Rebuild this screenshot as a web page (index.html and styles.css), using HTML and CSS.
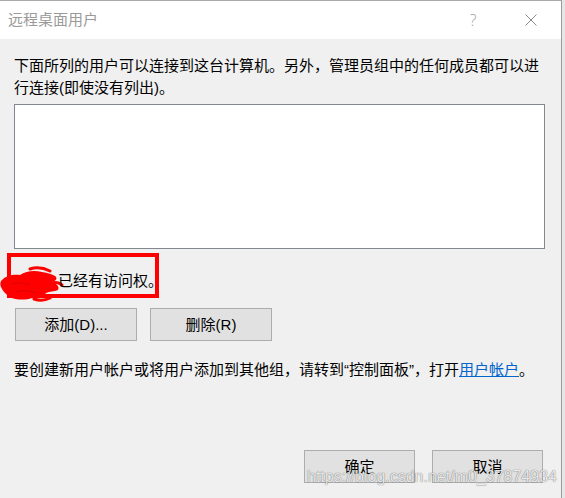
FILE: index.html
```html
<!DOCTYPE html>
<html lang="zh-CN">
<head>
<meta charset="utf-8">
<title>远程桌面用户</title>
<link rel="stylesheet" href="styles.css">
</head>
<body>
<div class="window">
  <div class="titlebar">
    <span class="title">远程桌面用户</span>
    <span class="help">?</span>
    <span class="close"><svg width="12" height="12" viewBox="0 0 12 12"><path d="M0.5 0.5 L11.5 11.5 M11.5 0.5 L0.5 11.5" stroke="#8a8a8a" stroke-width="1" fill="none"/></svg></span>
  </div>
  <div class="body">
    <p class="desc">下面所列的用户可以连接到这台计算机。另外，管理员组中的任何成员都可以进行连接(即使没有列出)。</p>
    <div class="listbox"></div>
    <div class="access">
      <svg class="scribble" width="64" height="38" viewBox="0 0 64 38">
        <path d="M1 16 C6 10 14 9 20 10 C26 6 34 5 42 7 C48 8 52 9 55 11 C58 13 56 16 52 17 C56 19 60 21 58 25 C54 27 50 26 46 28 C44 32 38 34 32 33 C26 35 18 35 12 33 C8 31 4 28 2 24 C0 21 0 18 1 16 Z" fill="#ff0000"/>
        <path d="M30 4 C36 2 44 3 50 6" stroke="#ff0000" stroke-width="3" fill="none" stroke-linecap="round"/>
        <path d="M34 34 C40 36 46 35 50 33" stroke="#ff0000" stroke-width="3" fill="none" stroke-linecap="round"/>
        <path d="M50 18 C55 17 60 18 62 20" stroke="#ff0000" stroke-width="3" fill="none" stroke-linecap="round"/>
        <path d="M12 19 C18 17 24 18 30 20" stroke="#e80000" stroke-width="1.5" fill="none"/>
        <path d="M16 27 C22 25 30 26 36 28" stroke="#e80000" stroke-width="1.5" fill="none"/>
      </svg>
      <span class="access-text">已经有访问权。</span>
    </div>
    <div class="actions">
      <button class="btn">添加(D)...</button>
      <button class="btn">删除(R)</button>
    </div>
    <p class="info">要创建新用户帐户或将用户添加到其他组，请转到“控制面板”，打开<a class="link" href="#">用户帐户</a>。</p>
    <div class="footer">
      <button class="btn btn-footer">确定</button>
      <button class="btn btn-footer">取消</button>
    </div>
  </div>
  <div class="watermark">https://blog.csdn.net/m0_37874934</div>
</div>
</body>
</html>
```
FILE: styles.css
```css
* { box-sizing: border-box; }
html, body { margin: 0; padding: 0; }
body {
  background: #e6e6e6;
  font-family: "Liberation Sans", "Noto Sans CJK SC", sans-serif;
  font-size: 15px;
  color: #000;
  width: 565px;
  height: 498px;
  overflow: hidden;
}
.window {
  position: relative;
  width: 562px;
  height: 498px;
  border-top: 1px solid #a9a9a9;
  border-right: 1px solid #9c9c9c;
  background: #f0f0f0;
  display: flex;
  flex-direction: column;
}
.titlebar {
  height: 38px;
  flex: 0 0 38px;
  background: #fff;
  display: flex;
  align-items: center;
  padding-left: 8px;
  color: #9a9a9a;
}
.title { flex: 1; font-size: 15px; line-height: 20px; }
.help {
  width: 20px;
  text-align: center;
  margin-right: 32px;
  font-size: 16px;
  color: #a0a0a0;
  font-family: "Open Sans", "Liberation Sans", sans-serif;
  font-weight: 300;
}
.close {
  width: 32px;
  margin-right: 14px;
  display: flex;
  justify-content: center;
  align-items: center;
}
.body {
  flex: 1;
  display: flex;
  flex-direction: column;
  padding: 16px 17px 15px 14px;
}
.desc {
  margin: 0;
  line-height: 22px;
}
.listbox {
  margin-top: 5px;
  width: 531px;
  height: 145px;
  border: 1px solid #828790;
  background: #fff;
}
.access {
  position: relative;
  margin-top: 4px;
  margin-left: -7px;
  width: 152px;
  height: 45px;
  border: 4px solid #ff0000;
  padding: 13px 0 0 47px;
  line-height: 22px;
  white-space: nowrap;
}
.scribble {
  position: absolute;
  left: -11px;
  top: 8px;
}
.access-text { position: relative; }
.actions {
  margin-top: 10px;
  margin-left: 1px;
  display: flex;
  gap: 13px;
}
.btn {
  width: 122px;
  height: 33px;
  background: #e1e1e1;
  border: 1px solid #adadad;
  font-family: "Liberation Sans", "Noto Sans CJK SC", sans-serif;
  font-size: 15px;
  color: #000;
  padding: 0;
  line-height: 20px;
}
.info {
  margin: 18px 0 0 0;
  line-height: 22px;
  white-space: nowrap;
}
.link { color: #0066cc; text-decoration: underline; }
.footer {
  margin-top: auto;
  margin-right: 1px;
  display: flex;
  justify-content: flex-end;
  gap: 17px;
}
.btn-footer { width: 111px; height: 33px; }
.watermark {
  position: absolute;
  left: 307px;
  top: 467px;
  font-family: "Liberation Sans", sans-serif;
  font-size: 16px;
  color: rgba(255, 255, 255, 0.85);
  text-shadow: 0 0 1px rgba(0, 0, 0, 0.45), 0 0 1px rgba(0, 0, 0, 0.3);
  white-space: nowrap;
}
```
